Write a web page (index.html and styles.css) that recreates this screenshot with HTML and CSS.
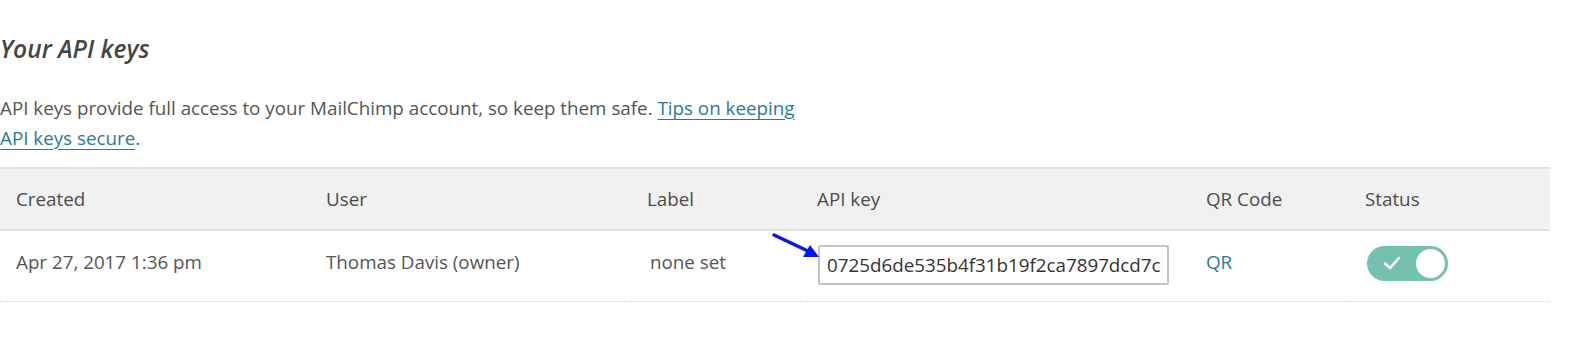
FILE: index.html
```html
<!DOCTYPE html>
<html lang="en">
<head>
    <meta charset="UTF-8">
    <title>API keys</title>
    <link rel="stylesheet" href="styles.css">
</head>
<body>
    <div class="page">
        <h2 class="section-title">Your API keys</h2>
        <p class="intro">
            API keys provide full access to your MailChimp account, so keep them safe.
            <a href="#" class="link">Tips on keeping API keys secure</a>.
        </p>

        <table class="keys-table">
            <thead>
                <tr>
                    <th class="col-created">Created</th>
                    <th class="col-user">User</th>
                    <th class="col-label">Label</th>
                    <th class="col-key">API key</th>
                    <th class="col-qr">QR Code</th>
                    <th class="col-status">Status</th>
                </tr>
            </thead>
            <tbody>
                <tr>
                    <td class="text-cell">Apr 27, 2017 1:36 pm</td>
                    <td class="text-cell">Thomas Davis (owner)</td>
                    <td class="text-cell label-cell">none set</td>
                    <td class="key-cell">
                        <!-- arrow drawn on the screenshot -->
                        <svg class="pointer" width="50" height="30" viewBox="0 0 50 30">
                            <line x1="2" y1="3" x2="38" y2="20" stroke="#0a14f0" stroke-width="3.5" stroke-linecap="round"/>
                            <polygon points="47,25 31,25 38,13" fill="#0a14f0"/>
                        </svg>
                        <input class="key-input" type="text" value="0725d6de535b4f31b19f2ca7897dcd7c" readonly>
                    </td>
                    <td class="text-cell"><a href="#" class="qr-link">QR</a></td>
                    <td class="status-cell">
                        <span class="toggle">
                            <svg class="check" width="18" height="14" viewBox="0 0 18 14">
                                <polyline points="2,7.5 7,12 16,2" fill="none" stroke="#fff" stroke-width="2.6" stroke-linecap="round" stroke-linejoin="round"/>
                            </svg>
                            <span class="knob"></span>
                        </span>
                    </td>
                </tr>
            </tbody>
        </table>
    </div>
</body>
</html>
```

FILE: styles.css
```css
body {
    margin: 0;
    font-family: "Open Sans", "Liberation Sans", sans-serif;
    color: #555;
    background: #fff;
}

.page {
    width: 1550px;
    padding-top: 31px;
}

.section-title {
    margin: 0;
    font-size: 24.5px;
    font-weight: 600;
    font-style: italic;
    color: #454545;
    line-height: 36px;
}

.intro {
    margin: 26px 0 14px;
    max-width: 800px;
    font-size: 18.8px;
    line-height: 30px;
    color: #555;
}

.link {
    color: #2a7b92;
    text-decoration: underline;
    text-underline-offset: 4px;
}

/* table */
.keys-table {
    width: 1550px;
    border-collapse: collapse;
    font-size: 18.8px;
}

.keys-table th {
    background: #f1f1f1;
    border-top: 2px solid #e2e2e2;
    border-bottom: 2px solid #e2e2e2;
    font-weight: normal;
    text-align: left;
    color: #4c4c4c;
    height: 60px;
    padding: 0 16px;
}

.keys-table td {
    height: 70px;
    padding: 0 16px;
    border-bottom: 1px dotted #cfcfcf;
    color: #555;
}

/* row content sits a little above the middle */
.keys-table td.text-cell {
    height: 62px;
    padding-bottom: 8px;
}

.keys-table td.status-cell {
    height: 64px;
    padding-bottom: 6px;
}

.keys-table td.key-cell {
    height: 68px;
    padding-bottom: 2px;
}

.col-created { width: 278px; }
.col-user { width: 289px; }
.col-label { width: 138px; }
.col-key { width: 357px; }
.col-qr { width: 127px; }

.keys-table td.label-cell {
    padding-left: 19px;
}

.key-cell {
    position: relative;
}

.pointer {
    position: absolute;
    left: -29px;
    top: 1px;
}

.key-input {
    box-sizing: border-box;
    width: 351px;
    height: 40px;
    margin-left: 1px;
    border: 2px solid #c4c4c4;
    border-radius: 2px;
    padding: 0 7px;
    font-family: "Open Sans", "Liberation Sans", sans-serif;
    font-size: 18.8px;
    color: #333;
    outline: none;
}

.qr-link {
    color: #2a7b92;
    text-decoration: none;
}

.toggle {
    display: inline-flex;
    align-items: center;
    justify-content: space-between;
    box-sizing: border-box;
    width: 81px;
    height: 35px;
    padding: 0 3px 0 16px;
    margin-left: 2px;
    border-radius: 18px;
    background: #74c1ae;
    vertical-align: middle;
}

.knob {
    width: 29px;
    height: 29px;
    border-radius: 50%;
    background: #fff;
}
```
